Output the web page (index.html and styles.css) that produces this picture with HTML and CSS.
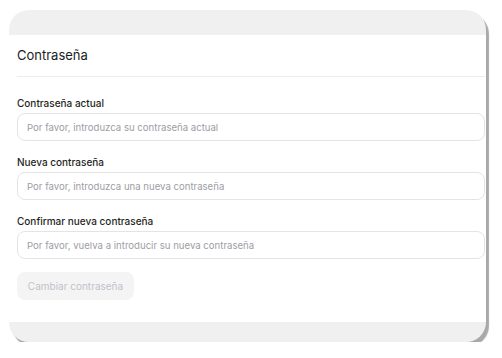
FILE: index.html
```html
<!DOCTYPE html>
<html>
<head>
<meta name="viewport" content="width=device-width, initial-scale=1">
<link rel="stylesheet" href="styles.css">
</head>
<body>

<div class="window">
  <div class="strip-top"></div>

  <div class="panel">
    <h3 class="title">Contraseña</h3>

    <form class="form">
      <div class="field">
        <label for="current">Contraseña actual</label>
        <input type="password" id="current" placeholder="Por favor, introduzca su contraseña actual">
      </div>

      <div class="field">
        <label for="newpass">Nueva contraseña</label>
        <input type="password" id="newpass" placeholder="Por favor, introduzca una nueva contraseña">
      </div>

      <div class="field">
        <label for="confirm">Confirmar nueva contraseña</label>
        <input type="password" id="confirm" placeholder="Por favor, vuelva a introducir su nueva contraseña">
      </div>

      <button type="button" class="submit" disabled>Cambiar contraseña</button>
    </form>
  </div>

  <div class="strip-bottom"></div>
</div>

</body>
</html>
```

FILE: styles.css
```css
body {
    margin: 0;
    background: #fff;
    font-family: Inter, "Noto Sans", sans-serif;
}

/* The window with the grey strips top and bottom */
.window {
    margin: 10px 0 0 9px;
    width: 477px;
    height: 332px;
    border-radius: 20px;
    background: #f0f0f0;
    overflow: hidden;
    box-shadow: 3px 4px 1px #a9a9a9;
    display: flex;
    flex-direction: column;
}

.strip-top {
    height: 25px;
}

.strip-bottom {
    height: 20px;
}

.panel {
    height: 287px;
    background: #fff;
    padding: 0 1px 0 8px;
}

.title {
    margin: 0;
    height: 41px;
    line-height: 40px;
    font-size: 13px;
    font-weight: 400;
    color: #1c1c1e;
    border-bottom: 1px solid #ececee;
}

.form {
    display: flex;
    flex-direction: column;
    align-items: flex-start;
    gap: 14px;
    padding-top: 19px;
}

.field {
    display: flex;
    flex-direction: column;
    gap: 3px;
    width: 100%;
}

.field label {
    font-size: 10px;
    line-height: 14px;
    font-weight: 500;
    color: #1f1f22;
}

.field input {
    height: 28px;
    box-sizing: border-box;
    border: 1px solid #e4e4e7;
    border-radius: 8px;
    padding: 0 9px;
    font-family: inherit;
    font-size: 9.6px;
    color: #333;
    outline: none;
}

.field input::placeholder {
    color: #9d9da5;
}

/* Disabled submit button */
.submit {
    margin-top: -1px;
    height: 28px;
    width: 117px;
    border: none;
    border-radius: 8px;
    background: #f4f4f5;
    color: #c2c2c9;
    font-family: inherit;
    font-size: 10px;
}
```
